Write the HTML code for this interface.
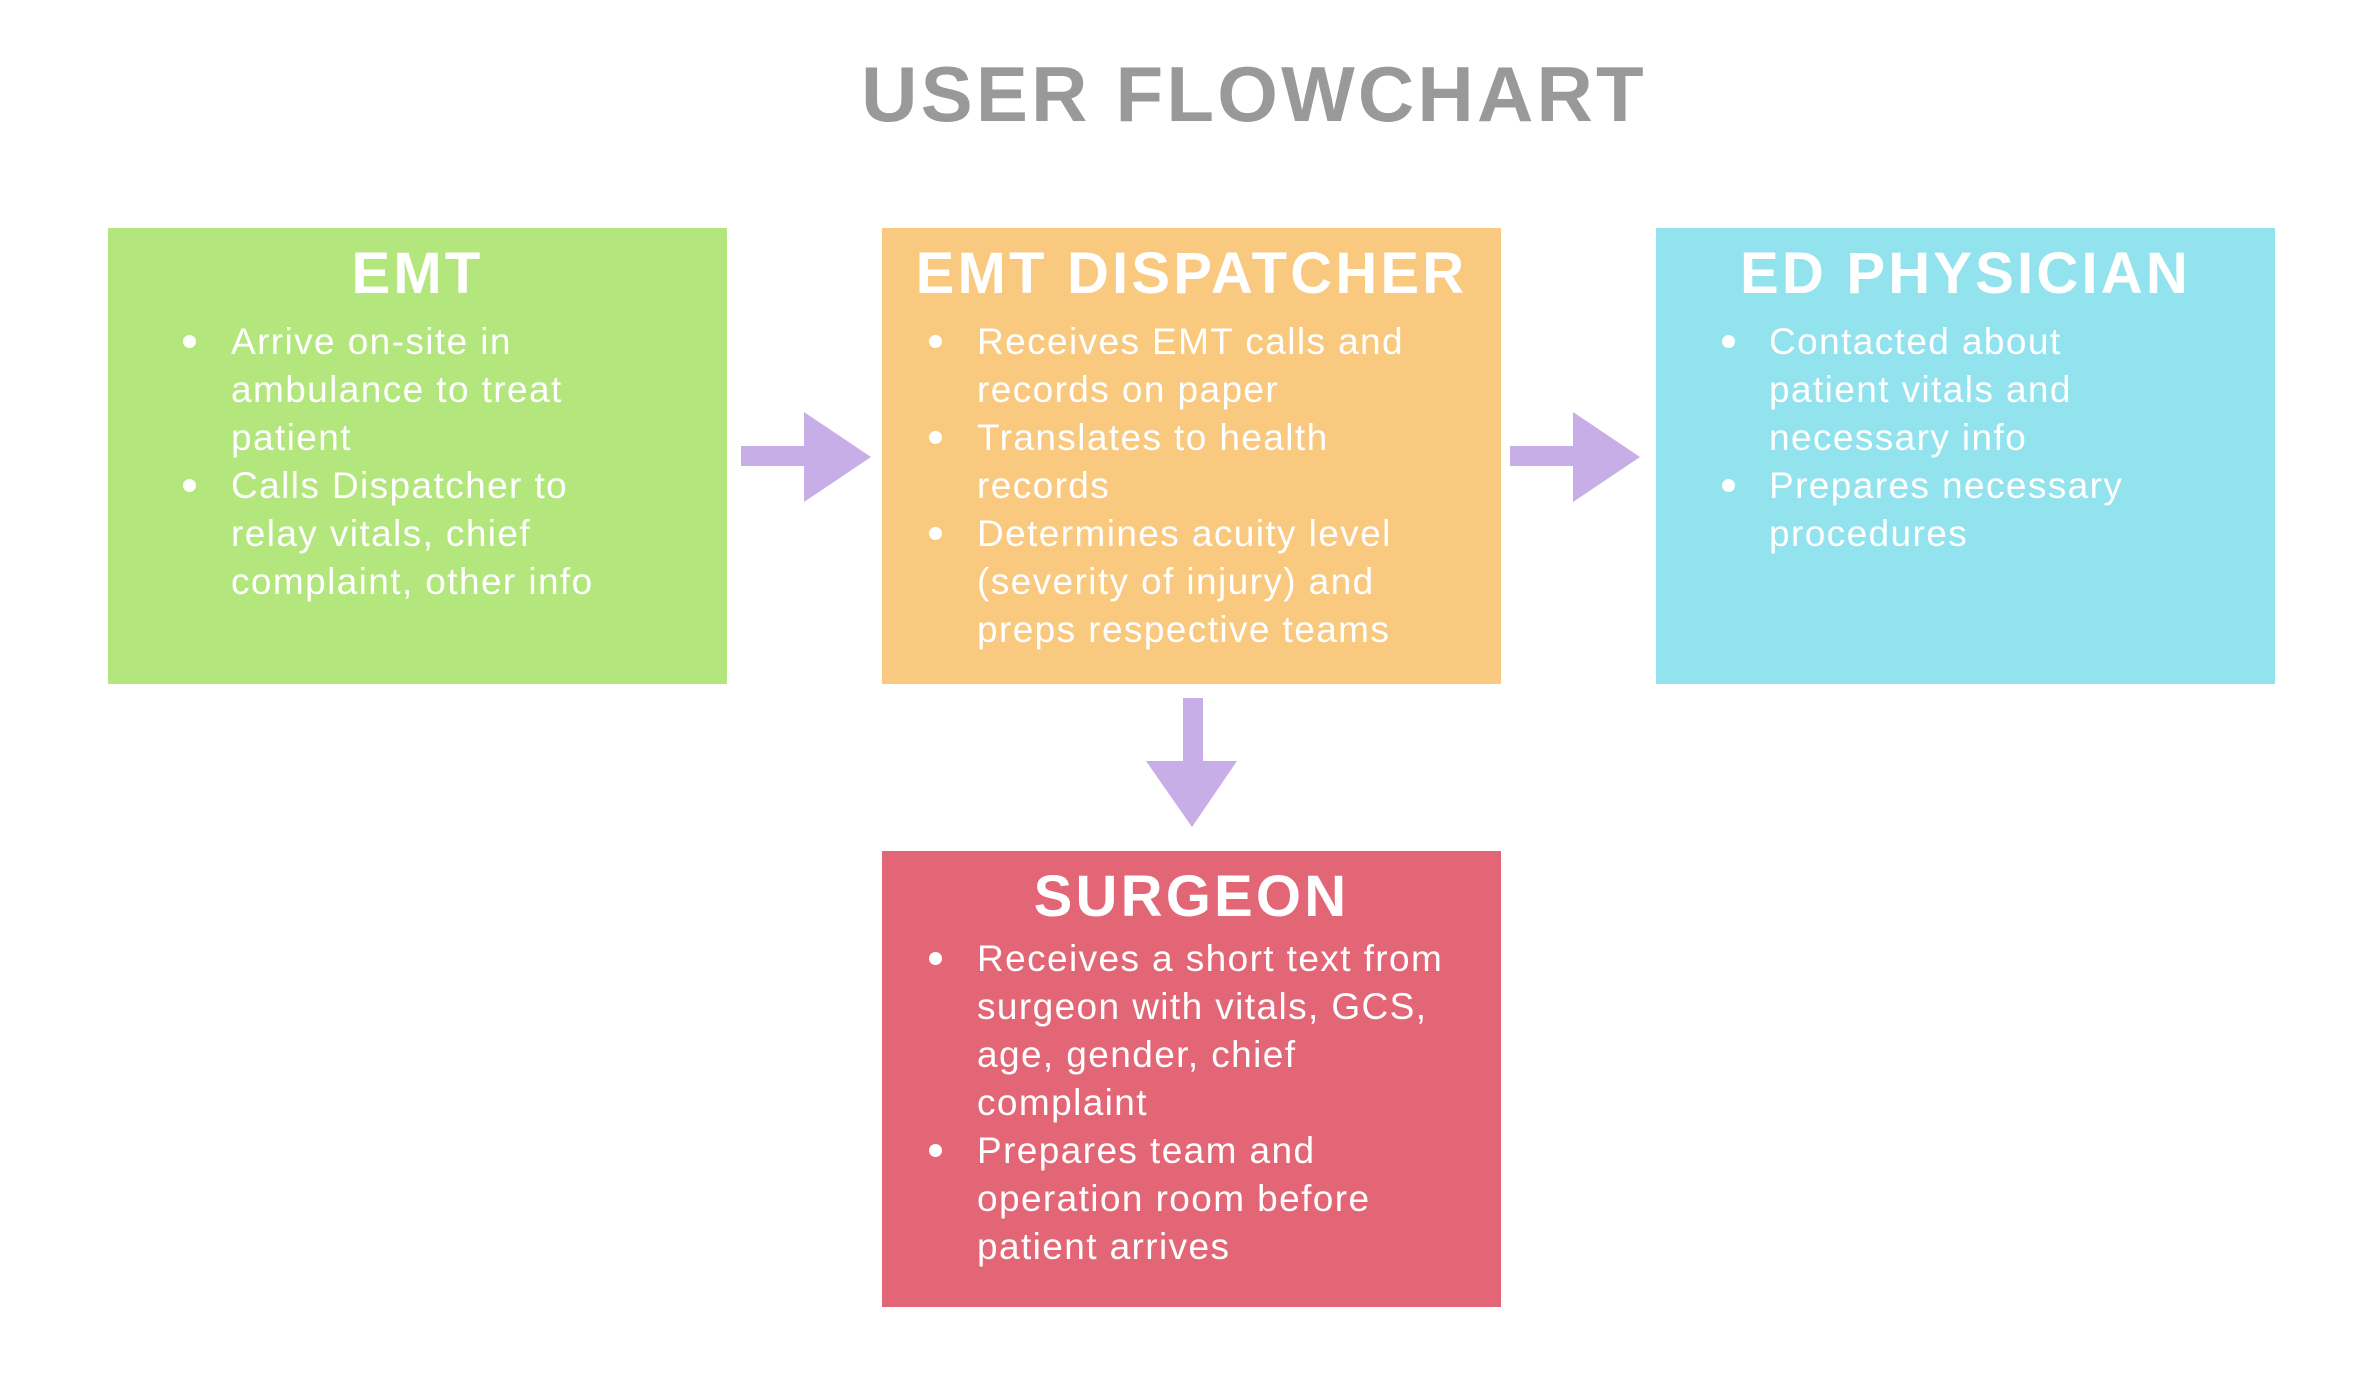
<!DOCTYPE html>
<html><head><meta charset="utf-8"><style>
*{margin:0;padding:0;box-sizing:border-box}
body{width:2380px;height:1388px;background:#fff;position:relative;overflow:hidden;font-family:"Liberation Sans",sans-serif;color:#fff}
.title{position:absolute;left:0;width:2508px;top:55px;text-align:center;font-size:78px;line-height:78px;font-weight:bold;color:#999;letter-spacing:3.2px}
.box{position:absolute;width:619px;height:456px}
.h{position:absolute;left:0;right:0;top:17px;text-align:center;font-size:58px;line-height:57px;font-weight:bold;letter-spacing:3.2px}
.l{position:absolute;left:123px;font-size:37px;line-height:48px;white-space:nowrap;letter-spacing:1.4px}
.b{position:absolute;left:72px;width:13px;height:13px;border-radius:50%;background:#fff}
.d .l{left:95px}.d .b{left:47px}
.p .l{left:113px}.p .b{left:66px}
.e .b{left:75px}
.s .l,.s .b{margin-top:-6px}
</style></head><body>
<div class="title">USER FLOWCHART</div>

<div class="box e" style="left:108px;top:228px;background:#b3e67c">
<div class="h">EMT</div>
<div class="b" style="top:107px"></div>
<div class="l" style="top:90px">Arrive on-site in</div>
<div class="l" style="top:138px">ambulance to treat</div>
<div class="l" style="top:186px">patient</div>
<div class="b" style="top:251px"></div>
<div class="l" style="top:234px">Calls Dispatcher to</div>
<div class="l" style="top:282px">relay vitals, chief</div>
<div class="l" style="top:330px">complaint, other info</div>
</div>

<div class="box d" style="left:882px;top:228px;background:#f8c97f">
<div class="h">EMT DISPATCHER</div>
<div class="b" style="top:107px"></div>
<div class="l" style="top:90px">Receives EMT calls and</div>
<div class="l" style="top:138px">records on paper</div>
<div class="b" style="top:203px"></div>
<div class="l" style="top:186px">Translates to health</div>
<div class="l" style="top:234px">records</div>
<div class="b" style="top:299px"></div>
<div class="l" style="top:282px">Determines acuity level</div>
<div class="l" style="top:330px">(severity of injury) and</div>
<div class="l" style="top:378px">preps respective teams</div>
</div>

<div class="box p" style="left:1656px;top:228px;background:#93e3ef">
<div class="h">ED PHYSICIAN</div>
<div class="b" style="top:107px"></div>
<div class="l" style="top:90px">Contacted about</div>
<div class="l" style="top:138px">patient vitals and</div>
<div class="l" style="top:186px">necessary info</div>
<div class="b" style="top:251px"></div>
<div class="l" style="top:234px">Prepares necessary</div>
<div class="l" style="top:282px">procedures</div>
</div>

<div class="box d s" style="left:882px;top:851px;background:#e36676">
<div class="h">SURGEON</div>
<div class="b" style="top:107px"></div>
<div class="l" style="top:90px">Receives a short text from</div>
<div class="l" style="top:138px">surgeon with vitals, GCS,</div>
<div class="l" style="top:186px">age, gender, chief</div>
<div class="l" style="top:234px">complaint</div>
<div class="b" style="top:299px"></div>
<div class="l" style="top:282px">Prepares team and</div>
<div class="l" style="top:330px">operation room before</div>
<div class="l" style="top:378px">patient arrives</div>
</div>

<svg style="position:absolute;left:0;top:0" width="2380" height="1388">
<polygon fill="#c8aee6" points="741,446 804,446 804,412 871,457 804,502 804,466 741,466"/>
<polygon fill="#c8aee6" points="1518,446 1581,446 1581,412 1648,457 1581,502 1581,466 1518,466" transform="translate(-8,0)"/>
<polygon fill="#c8aee6" points="1183,698 1203,698 1203,761 1237,761 1192,827 1146,761 1183,761"/>
</svg>
</body></html>
